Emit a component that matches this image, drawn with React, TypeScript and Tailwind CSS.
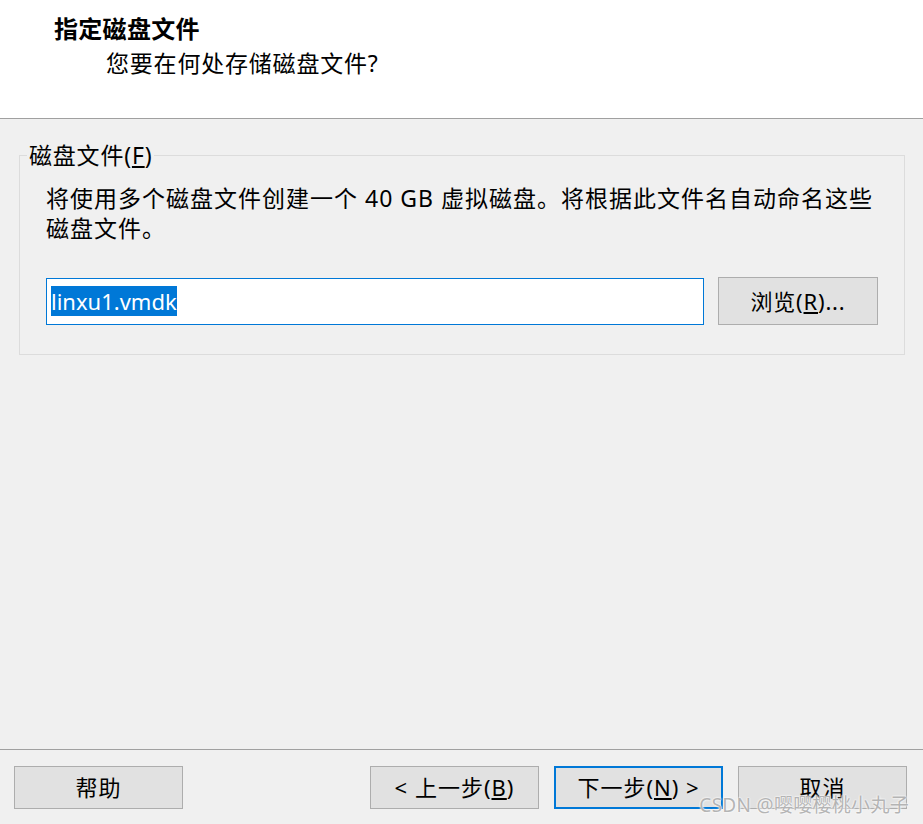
const font = { fontFamily: '"Noto Sans", "Noto Sans CJK SC", sans-serif' };

function Btn({ children, primary }: { children: React.ReactNode; primary?: boolean }) {
  return (
    <button
      className={
        primary
          ? 'h-[43px] w-[169px] border-2 border-[#0078d7] bg-[#e1e1e1] text-[22px] tracking-[1px] text-black'
          : 'h-[43px] w-[169px] border border-[#adadad] bg-[#e1e1e1] text-[22px] tracking-[1px] text-black'
      }
    >
      {children}
    </button>
  );
}

export default function App() {
  return (
    <div className="relative flex h-[824px] w-[923px] flex-col bg-[#f0f0f0] text-black" style={font}>
      {/* header */}
      <div className="h-[119px] border-b border-[#a0a0a0] bg-white pl-[54px] pt-[13px]">
        <div className="text-[24px] font-bold leading-[32px] tracking-[0.3px]">指定磁盘文件</div>
        <div className="pl-[52px] pt-[2px] text-[23px] leading-[32px] tracking-[0.8px]">您要在何处存储磁盘文件?</div>
      </div>

      {/* body */}
      <div className="flex-1 px-[19px] pt-[36px]">
        <div className="relative h-[200px] w-[886px] border border-[#dcdcdc] pl-[26px] pt-[27px]">
          <div className="absolute left-[7px] top-[-15px] bg-[#f0f0f0] px-[2px] text-[23px] leading-[28px] tracking-[0.8px]">
            磁盘文件(<span className="underline underline-offset-2">F</span>)
          </div>
          <p className="w-[830px] text-[23px] leading-[30px] tracking-[1px]">
            将使用多个磁盘文件创建一个 40 GB 虚拟磁盘。将根据此文件名自动命名这些磁盘文件。
          </p>
          <div className="mt-[34px] flex items-center gap-[14px]">
            <div className="flex h-[47px] w-[658px] items-center border border-[#0078d7] bg-white px-[4px]">
              <span className="bg-[#0078d7] text-[22px] leading-[30px] text-white">linxu1.vmdk</span>
            </div>
            <button className="h-[48px] w-[160px] border border-[#adadad] bg-[#e1e1e1] text-[22px] tracking-[0.8px]">
              浏览(<span className="underline underline-offset-2">R</span>)...
            </button>
          </div>
        </div>
      </div>

      {/* footer */}
      <div className="flex h-[75px] items-start border-t border-[#a0a0a0] pl-[14px] pt-[16px]">
        <Btn>帮助</Btn>
        <div className="ml-[187px] flex gap-[15px]">
          <Btn>
            &lt; 上一步(<span className="underline underline-offset-2">B</span>)
          </Btn>
          <Btn primary>
            下一步(<span className="underline underline-offset-2">N</span>) &gt;
          </Btn>
          <Btn>取消</Btn>
        </div>
      </div>

      <div
        className="absolute bottom-[8px] right-[14px] text-[19px] leading-[22px] tracking-[0.3px] text-[#b4b4b4]"
        style={{ textShadow: '0 0 2px #fff, 0 0 2px #fff' }}
      >
        CSDN @嘤嘤樱桃小丸子
      </div>
    </div>
  );
}
